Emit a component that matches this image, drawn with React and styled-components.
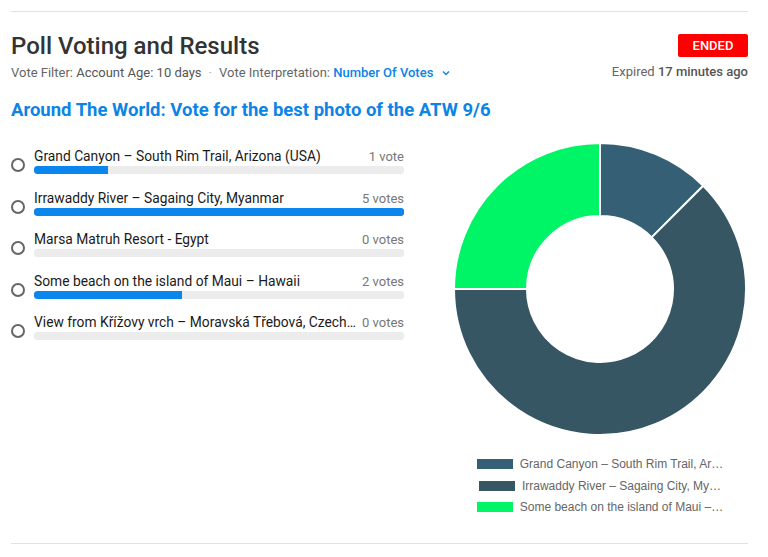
import styled, { createGlobalStyle } from 'styled-components';

const GlobalStyle = createGlobalStyle`
	body {
		margin: 0;
		background: #fff;
		font-family: Roboto, 'Liberation Sans', sans-serif;
	}
`;

const options = [
	{ label: 'Grand Canyon – South Rim Trail, Arizona (USA)', votes: 1, color: '#355f75', legend: 'Grand Canyon – South Rim Trail, Ar…' },
	{ label: 'Irrawaddy River – Sagaing City, Myanmar', votes: 5, color: '#375664', legend: 'Irrawaddy River – Sagaing City, My…' },
	{ label: 'Marsa Matruh Resort - Egypt', votes: 0 },
	{ label: 'Some beach on the island of Maui – Hawaii', votes: 2, color: '#00f566', legend: 'Some beach on the island of Maui –…' },
	{ label: 'View from Křížovy vrch – Moravská Třebová, Czech Republic', votes: 0 },
];

const Page = styled.div`
	padding: 11px 20px 0 11px;
`;

const Panel = styled.section`
	border-top: 1px solid #e2e2e2;
	border-bottom: 1px solid #e2e2e2;
	padding: 20px 0 28px;
`;

const Header = styled.div`
	display: flex;
	justify-content: space-between;
	align-items: flex-start;
`;

const TitleBlock = styled.div`
	display: flex;
	flex-direction: column;
`;

const Title = styled.h1`
	margin: 0;
	font-size: 24px;
	line-height: 28px;
	font-weight: 500;
	color: #333;
`;

const Meta = styled.div`
	margin-top: 4px;
	font-size: 13px;
	line-height: 18px;
	color: #666;
	display: flex;
	align-items: center;
	gap: 5px;
`;

const Strong = styled.span`
	font-weight: ${(p) => (p.$bold ? 500 : 400)};
	color: ${(p) => (p.$blue ? '#0b84e6' : '#555')};
`;

const Dot = styled.span`
	color: #aaa;
	margin: 0 2px;
`;

const Chevron = styled.svg`
	width: 10px;
	height: 10px;
	margin-left: 3px;
`;

const Status = styled.div`
	display: flex;
	flex-direction: column;
	align-items: flex-end;
	padding-top: 2px;
`;

const Badge = styled.span`
	background: #ff0000;
	color: #fff;
	font-size: 13px;
	font-weight: 500;
	line-height: 23px;
	width: 70px;
	text-align: center;
	border-radius: 2px;
`;

const Expired = styled.div`
	margin-top: 6px;
	font-size: 13px;
	line-height: 18px;
	color: #666;
`;

const PollTitle = styled.h2`
	margin: 16px 0 0;
	font-size: 18.5px;
	line-height: 24px;
	font-weight: 700;
	color: #0b84e6;
`;

const Body = styled.div`
	display: flex;
	justify-content: space-between;
	margin-top: 21px;
`;

const OptionList = styled.div`
	width: 393px;
	display: flex;
	flex-direction: column;
	gap: 13.5px;
	padding-top: 3px;
`;

const Option = styled.div`
	display: flex;
	align-items: center;
	gap: 9px;
`;

const Radio = styled.span`
	width: 14px;
	height: 14px;
	box-sizing: border-box;
	border: 2px solid #666;
	border-radius: 50%;
	flex-shrink: 0;
	margin-top: 10px;
`;

const OptionMain = styled.div`
	flex: 1;
	min-width: 0;
`;

const OptionHead = styled.div`
	display: flex;
	justify-content: space-between;
	align-items: baseline;
	gap: 6px;
	height: 20px;
`;

const OptionLabel = styled.span`
	font-size: 13.8px;
	line-height: 20px;
	font-weight: 400;
	color: #1a1a1a;
	white-space: nowrap;
	overflow: hidden;
	text-overflow: ellipsis;
	min-width: 0;
`;

const Count = styled.span`
	font-size: 13px;
	color: #777;
	white-space: nowrap;
	flex-shrink: 0;
`;

const Track = styled.div`
	height: 8px;
	border-radius: 3px;
	background: #ececec;
	overflow: hidden;
`;

const Fill = styled.div`
	height: 100%;
	background: #0b86ec;
	border-radius: 3px 0 0 3px;
`;

const ChartCol = styled.div`
	width: 296px;
	display: flex;
	flex-direction: column;
	align-items: center;
`;

const Legend = styled.ul`
	list-style: none;
	margin: 22px 0 0;
	padding: 0;
	display: flex;
	flex-direction: column;
	align-items: center;
	gap: 7px;
	font-family: 'Liberation Sans', Arial, sans-serif;
	font-size: 12px;
	color: #666;
`;

const LegendItem = styled.li`
	display: flex;
	align-items: center;
	gap: 7px;
	line-height: 14.5px;
`;

const Swatch = styled.span`
	width: 36px;
	height: 10px;
	background: ${(p) => p.$color};
`;

function arc(cx, cy, R, r, a0, a1) {
	const pt = (rad, a) => [cx + rad * Math.sin(a), cy - rad * Math.cos(a)];
	const large = a1 - a0 > Math.PI ? 1 : 0;
	const [x0, y0] = pt(R, a0);
	const [x1, y1] = pt(R, a1);
	const [x2, y2] = pt(r, a1);
	const [x3, y3] = pt(r, a0);
	return `M${x0} ${y0} A${R} ${R} 0 ${large} 1 ${x1} ${y1} L${x2} ${y2} A${r} ${r} 0 ${large} 0 ${x3} ${y3} Z`;
}

function Donut() {
	const total = options.reduce((s, o) => s + o.votes, 0);
	let start = 0;
	const slices = options
		.filter((o) => o.votes > 0)
		.map((o) => {
			const a0 = start;
			const a1 = start + (o.votes / total) * Math.PI * 2;
			start = a1;
			return <path key={o.label} d={arc(146, 146, 146, 73, a0, a1)} fill={o.color} stroke="#fff" strokeWidth="2" />;
		});
	return (
		<svg width="292" height="292" viewBox="0 0 292 292">
			{slices}
		</svg>
	);
}

export default function App() {
	const max = Math.max(...options.map((o) => o.votes));
	return (
		<Page>
			<GlobalStyle />
			<Panel>
				<Header>
					<TitleBlock>
						<Title>Poll Voting and Results</Title>
						<Meta>
							<span>
								Vote Filter: <Strong>Account Age: 10 days</Strong>
							</span>
							<Dot>·</Dot>
							<span>
								Vote Interpretation: <Strong $blue $bold>Number Of Votes</Strong>
							</span>
							<Chevron viewBox="0 0 10 10">
								<path d="M2 3.5 L5 6.5 L8 3.5" fill="none" stroke="#0b84e6" strokeWidth="1.4" />
							</Chevron>
						</Meta>
					</TitleBlock>
					<Status>
						<Badge>ENDED</Badge>
						<Expired>
							Expired <Strong $bold>17 minutes ago</Strong>
						</Expired>
					</Status>
				</Header>
				<PollTitle>Around The World: Vote for the best photo of the ATW 9/6</PollTitle>
				<Body>
					<OptionList>
						{options.map((o) => (
							<Option key={o.label}>
								<Radio />
								<OptionMain>
									<OptionHead>
										<OptionLabel>{o.label}</OptionLabel>
										<Count>
											{o.votes} {o.votes === 1 ? 'vote' : 'votes'}
										</Count>
									</OptionHead>
									<Track>
										<Fill style={{ width: `${(o.votes / max) * 100}%` }} />
									</Track>
								</OptionMain>
							</Option>
						))}
					</OptionList>
					<ChartCol>
						<Donut />
						<Legend>
							{options
								.filter((o) => o.votes > 0)
								.map((o) => (
									<LegendItem key={o.label}>
										<Swatch $color={o.color} />
										{o.legend}
									</LegendItem>
								))}
						</Legend>
					</ChartCol>
				</Body>
			</Panel>
		</Page>
	);
}
